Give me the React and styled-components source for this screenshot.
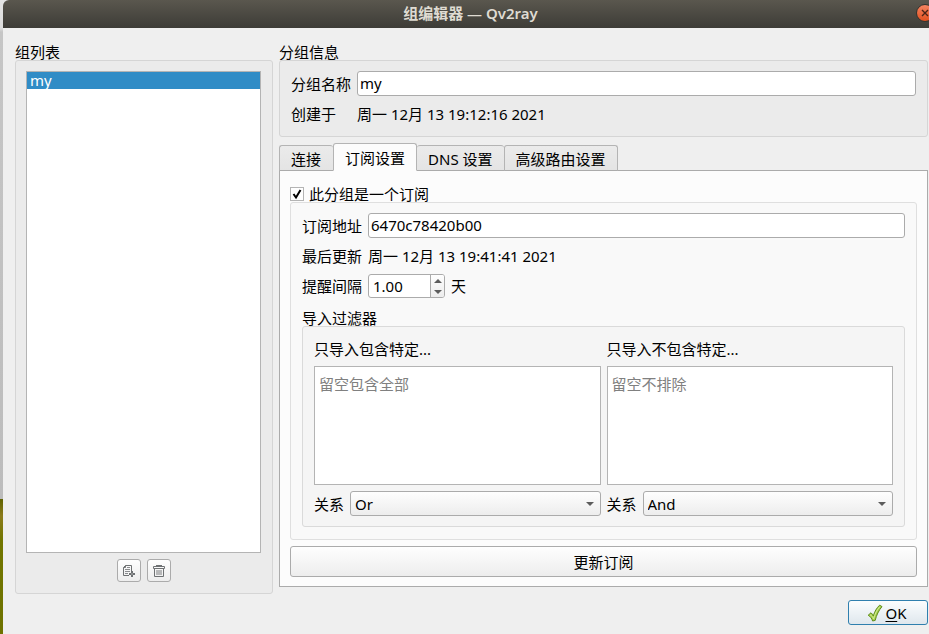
import React, { useState } from 'react';
import styled, { createGlobalStyle } from 'styled-components';

const GlobalStyle = createGlobalStyle`
  body {
    margin: 0;
  }

  body, button, input, textarea, select {
    font-family: "Noto Sans", "Noto Sans CJK SC", sans-serif;
    font-size: 15px;
    line-height: 18px;
    color: #000;
  }
`;

/* the sliver on the left is the desktop behind the dialog */
const Desktop = styled.div`
  box-sizing: border-box;
  min-height: 100vh;
  padding-left: 3px;
  display: flex;
  overflow: hidden;
  background: linear-gradient(#e4e4e4 0, #dcdcdc 28px, #c6c6c6 32px, #bcbcbc 499px, #5f6200 499px, #8c7c1c 516px, #727600 540px, #6e7200 100%);
`;

const Dialog = styled.div`
  flex: 1;
  min-width: 0;
  display: flex;
  flex-direction: column;
  border-top-left-radius: 6px;
  overflow: hidden;
  background: #efefef;
`;

const TitleBar = styled.header`
  display: grid;
  grid-template-columns: 1fr auto 1fr;
  align-items: center;
  height: 28px;
  margin-right: -9px;
  padding: 0 4px 2px;
  box-sizing: border-box;
  background: linear-gradient(#5a574e, #3d3c37);
`;

const Title = styled.h1`
  grid-column: 2;
  margin: 0;
  font-size: 15px;
  font-weight: 600;
  color: #dfdbd2;
`;

const CloseButton = styled.button`
  justify-self: end;
  display: flex;
  align-items: center;
  justify-content: center;
  width: 18px;
  height: 18px;
  padding: 0;
  border: 1px solid #34332e;
  border-radius: 50%;
  background: linear-gradient(#f58462, #e2511f);
`;

const Content = styled.main`
  flex: 1;
  display: flex;
  gap: 6px;
  padding: 15px 1px 0 12px;
`;

const Sidebar = styled.section`
  flex: 0 0 258px;
  display: flex;
  flex-direction: column;
`;

const Main = styled.div`
  flex: 1;
  min-width: 0;
  display: flex;
  flex-direction: column;
  padding-bottom: 7px;
`;

const GroupTitle = styled.h2`
  margin: 0;
  height: 17px;
  font-size: 15px;
  font-weight: 400;
  line-height: 18px;
  white-space: nowrap;
`;

const GroupBox = styled.div`
  flex: ${(p) => (p.$grow ? 1 : 'none')};
  display: flex;
  flex-direction: column;
  gap: 11px;
  padding: 10px 11px;
  border: 1px solid ${(p) => p.$border || '#d5d5d5'};
  border-radius: 3px;
  background: ${(p) => p.$bg || '#ebebeb'};
`;

const ListBox = styled(GroupBox)`
  gap: 6px;
  padding: 10px 11px 11px 10px;
`;

const GroupList = styled.ul`
  flex: 1;
  margin: 0;
  padding: 0;
  list-style: none;
  border: 1px solid #b4b4b4;
  background: #fff;
`;

const GroupItem = styled.li`
  height: 17px;
  padding-left: 3px;
  line-height: 16px;
  color: ${(p) => (p.$selected ? '#fff' : '#000')};
  background: ${(p) => (p.$selected ? '#308cc6' : 'transparent')};
`;

const ToolRow = styled.div`
  display: flex;
  justify-content: center;
  gap: 6px;
`;

const Button = styled.button`
  display: flex;
  align-items: center;
  justify-content: center;
  padding: 0;
  border: 1px solid #ababab;
  border-radius: 3px;
  background: linear-gradient(#fefefe, #ededed);
`;

const ToolButton = styled(Button)`
  width: 24px;
  height: 23px;
`;

const UpdateButton = styled(Button)`
  width: 100%;
  height: 31px;
  margin-top: 6px;
`;

const OkButton = styled(Button)`
  width: 80px;
  height: 25px;
  gap: 2px;
  padding-right: 2px;
  border-color: #2f7fae;
  background: linear-gradient(#fbfdfe, #dfe7ed);

  u {
    text-underline-offset: 2px;
  }
`;

const Form = styled.div`
  display: grid;
  grid-template-columns: auto 1fr;
  align-items: center;
  gap: 6px;
  line-height: 24px;
`;

const TextInput = styled.input`
  box-sizing: border-box;
  width: 100%;
  height: 25px;
  padding: 0 2px 2px;
  border: 1px solid #ababab;
  border-radius: 3px;
  background: #fff;
  outline: none;
`;

const Tabs = styled.div`
  display: flex;
  align-items: flex-end;
  height: 28px;
  margin: 6px 0 -1px;
`;

const Tab = styled.button`
  position: relative;
  box-sizing: border-box;
  height: ${(p) => (p.$active ? '28px' : '26px')};
  padding: 2px 11px 0;
  border: 1px solid #b4b4b4;
  border-left-width: ${(p) => (p.$joined ? 0 : '1px')};
  border-right-width: ${(p) => (p.$open ? 0 : '1px')};
  border-bottom-color: ${(p) => (p.$active ? '#fcfcfc' : '#ababab')};
  border-radius: 3px 3px 0 0;
  background: ${(p) => (p.$active ? '#fcfcfc' : 'linear-gradient(#ebebeb, #e4e4e4)')};

  &:first-child {
    padding: 2px 12px 0 11px;
  }
`;

const TabPanel = styled.section`
  flex: 1;
  display: flex;
  flex-direction: column;
  padding: 14px 10px 9px;
  border: 1px solid #ababab;
  background: #fcfcfc;
`;

const CheckRow = styled.label`
  display: flex;
  align-items: center;
  gap: 5px;
  height: 17px;
`;

const CheckFrame = styled.span`
  display: grid;
  width: 14px;
  height: 14px;

  > * {
    grid-area: 1 / 1;
  }

  svg {
    pointer-events: none;
  }
`;

const CheckInput = styled.input`
  appearance: none;
  box-sizing: border-box;
  width: 14px;
  height: 14px;
  margin: 0;
  border: 1px solid #b4b4b4;
  background: #fff;
`;

const SpinRow = styled.div`
  display: flex;
  align-items: center;
  gap: 6px;
`;

const SpinBox = styled.div`
  box-sizing: border-box;
  display: flex;
  width: 77px;
  height: 24px;
  border: 1px solid #ababab;
  border-radius: 3px;
  background: #fff;
  overflow: hidden;
`;

const SpinInput = styled.input`
  flex: 1;
  min-width: 0;
  padding: 0 4px;
  border: 0;
  outline: none;
  background: transparent;
  appearance: textfield;

  &::-webkit-inner-spin-button {
    appearance: none;
    margin: 0;
  }
`;

const SpinButtons = styled.div`
  display: flex;
  flex-direction: column;
  width: 13px;
  border-left: 1px solid #ababab;
  background: linear-gradient(#fefefe, #ededed);
`;

const SpinButton = styled.button`
  flex: 1;
  display: flex;
  align-items: center;
  justify-content: center;
  padding: 0;
  border: 0;
  background: transparent;
`;

const Filters = styled.div`
  display: grid;
  grid-template-columns: 1fr 1fr;
  gap: 6px;
`;

const Filter = styled.div`
  display: flex;
  flex-direction: column;
`;

const FilterLabel = styled.label`
  height: 29px;
  line-height: 25px;
`;

const FilterText = styled.textarea`
  box-sizing: border-box;
  width: 100%;
  height: 119px;
  padding: 8px 4px;
  border: 1px solid #b4b4b4;
  background: #fff;
  resize: none;
  outline: none;

  &::placeholder {
    color: #808080;
  }
`;

const RelationRow = styled.div`
  display: flex;
  align-items: center;
  gap: 6px;
  margin-top: 6px;
`;

const SelectFrame = styled.div`
  flex: 1;
  display: grid;
  align-items: center;

  > * {
    grid-area: 1 / 1;
  }

  svg {
    justify-self: end;
    margin-right: 7px;
    pointer-events: none;
  }
`;

const Select = styled.select`
  appearance: none;
  width: 100%;
  height: 25px;
  padding: 0 4px;
  border: 1px solid #ababab;
  border-radius: 3px;
  background: linear-gradient(#fefefe, #ededed);
  outline: none;
`;

const Footer = styled.footer`
  display: flex;
  justify-content: flex-end;
  padding: 6px 1px 9px;
`;

const Arrow = ({ up }) => (
  <svg width="8" height="4" viewBox="0 0 8 4" aria-hidden="true">
    <path d={up ? 'M0 4L4 0L8 4Z' : 'M0 0H8L4 4Z'} fill="#5c5c5c" />
  </svg>
);

const AddIcon = () => (
  <svg width="14" height="14" viewBox="0 0 14 14" fill="none" stroke="#6e7173" aria-hidden="true">
    <path d="M9.5 7V1.5H3.5L1.5 3.5V11.5H7M1.5 3.5H3.5V1.5" />
    <path d="M5 3.5H8M3 5.5H8M3 7.5H8M3 9.5H6" strokeWidth="0.8" />
    <path d="M10 7V13M7 10H13" strokeWidth="2" />
    <path d="M9 10H11" stroke="#b0b2b3" />
  </svg>
);

const TrashIcon = () => (
  <svg width="14" height="14" viewBox="0 0 14 14" fill="none" stroke="#6e7173" aria-hidden="true">
    <path d="M4 1.5H10" />
    <path d="M1.5 2.5H12.5V4.5H1.5Z" />
    <path d="M2.5 4.5V12.5H11.5V4.5" />
    <path d="M5 6V11M7 6V11M9 6V11" strokeWidth="0.9" />
  </svg>
);

const OkIcon = () => (
  <svg width="16" height="18" viewBox="0 0 16 18" aria-hidden="true">
    <path
      d="M1.2 11.2L4 8.8C5.2 9.6 5.9 10.8 6.3 12C7.6 7.6 9.6 3.9 12.6 1.2L15 2.6C11.7 6.5 9.4 11.2 8.2 16.4L5.6 17C4.9 14.6 3.5 12.6 1.2 11.2Z"
      fill="#a5cf4c"
      stroke="#5f8c1c"
      strokeLinejoin="round"
    />
    <path d="M3 10.8C4.8 11.5 5.8 13 6.6 15C8 9.6 10 5.6 13 2.6" fill="none" stroke="#d3ec94" />
  </svg>
);

const TABS = ['连接', '订阅设置', 'DNS 设置', '高级路由设置'];

const FILTERS = [
  { id: 'include', label: '只导入包含特定...', placeholder: '留空包含全部', relation: 'Or' },
  { id: 'exclude', label: '只导入不包含特定...', placeholder: '留空不排除', relation: 'And' },
];

function App() {
  const [name, setName] = useState('my');
  const [tab, setTab] = useState(1);
  const [isSubscription, setIsSubscription] = useState(true);
  const [address, setAddress] = useState('6470c78420b00');
  const [interval, setInterval] = useState('1.00');

  const step = (delta) => {
    setInterval(Math.max(0, Number(interval) + delta).toFixed(2));
  };

  return (
    <>
      <GlobalStyle />
      <Desktop>
        <Dialog role="dialog" aria-labelledby="dialog-title">
          <TitleBar>
            <Title id="dialog-title">组编辑器 — Qv2ray</Title>
            <CloseButton aria-label="关闭">
              <svg width="8" height="8" viewBox="0 0 8 8" stroke="#4a2416" strokeWidth="1.4" aria-hidden="true">
                <path d="M1 1L7 7M7 1L1 7" />
              </svg>
            </CloseButton>
          </TitleBar>

          <Content>
            <Sidebar>
              <GroupTitle>组列表</GroupTitle>
              <ListBox $grow>
                <GroupList>
                  <GroupItem $selected>{name}</GroupItem>
                </GroupList>
                <ToolRow>
                  <ToolButton aria-label="添加"><AddIcon /></ToolButton>
                  <ToolButton aria-label="删除"><TrashIcon /></ToolButton>
                </ToolRow>
              </ListBox>
            </Sidebar>

            <Main>
              <GroupTitle>分组信息</GroupTitle>
              <GroupBox>
                <Form>
                  <label htmlFor="group-name">分组名称</label>
                  <TextInput id="group-name" value={name} onChange={(e) => setName(e.target.value)} />
                  <span>创建于</span>
                  <span>周一 12月 13 19:12:16 2021</span>
                </Form>
              </GroupBox>

              <Tabs role="tablist">
                {TABS.map((label, i) => (
                  <Tab
                    key={label}
                    role="tab"
                    aria-selected={tab === i}
                    $active={tab === i}
                    $joined={i === tab + 1}
                    $open={i !== tab && i < TABS.length - 1}
                    onClick={() => setTab(i)}
                  >
                    {label}
                  </Tab>
                ))}
              </Tabs>

              <TabPanel role="tabpanel">
                <CheckRow>
                  <CheckFrame>
                    <CheckInput
                      type="checkbox"
                      checked={isSubscription}
                      onChange={(e) => setIsSubscription(e.target.checked)}
                    />
                    {isSubscription && (
                      <svg width="14" height="14" viewBox="0 0 14 14" fill="none" stroke="#000" strokeWidth="2" aria-hidden="true">
                        <path d="M3.5 7L6 10.5L10.5 3" />
                      </svg>
                    )}
                  </CheckFrame>
                  此分组是一个订阅
                </CheckRow>
                <GroupBox $grow $border="#dfdfdf" $bg="#f9f9f9">
                  <Form>
                    <label htmlFor="address">订阅地址</label>
                    <TextInput id="address" value={address} onChange={(e) => setAddress(e.target.value)} />
                    <span>最后更新</span>
                    <span>周一 12月 13 19:41:41 2021</span>
                    <label htmlFor="interval">提醒间隔</label>
                    <SpinRow>
                      <SpinBox>
                        <SpinInput
                          id="interval"
                          type="number"
                          step="0.01"
                          value={interval}
                          onChange={(e) => setInterval(e.target.value)}
                        />
                        <SpinButtons>
                          <SpinButton aria-label="增加" onClick={() => step(1)}><Arrow up /></SpinButton>
                          <SpinButton aria-label="减少" onClick={() => step(-1)}><Arrow /></SpinButton>
                        </SpinButtons>
                      </SpinBox>
                      天
                    </SpinRow>
                  </Form>
                  <div>
                    <GroupTitle>导入过滤器</GroupTitle>
                    <GroupBox $border="#dadada" $bg="#f5f5f5">
                      <Filters>
                        {FILTERS.map((f) => (
                          <Filter key={f.id}>
                            <FilterLabel htmlFor={f.id}>{f.label}</FilterLabel>
                            <FilterText id={f.id} placeholder={f.placeholder} />
                            <RelationRow>
                              <label htmlFor={`${f.id}-relation`}>关系</label>
                              <SelectFrame>
                                <Select id={`${f.id}-relation`} defaultValue={f.relation}>
                                  <option>Or</option>
                                  <option>And</option>
                                </Select>
                                <Arrow />
                              </SelectFrame>
                            </RelationRow>
                          </Filter>
                        ))}
                      </Filters>
                    </GroupBox>
                  </div>
                </GroupBox>
                <UpdateButton>更新订阅</UpdateButton>
              </TabPanel>
            </Main>
          </Content>

          <Footer>
            <OkButton>
              <OkIcon />
              <span><u>O</u>K</span>
            </OkButton>
          </Footer>
        </Dialog>
      </Desktop>
    </>
  );
}

export default App;
